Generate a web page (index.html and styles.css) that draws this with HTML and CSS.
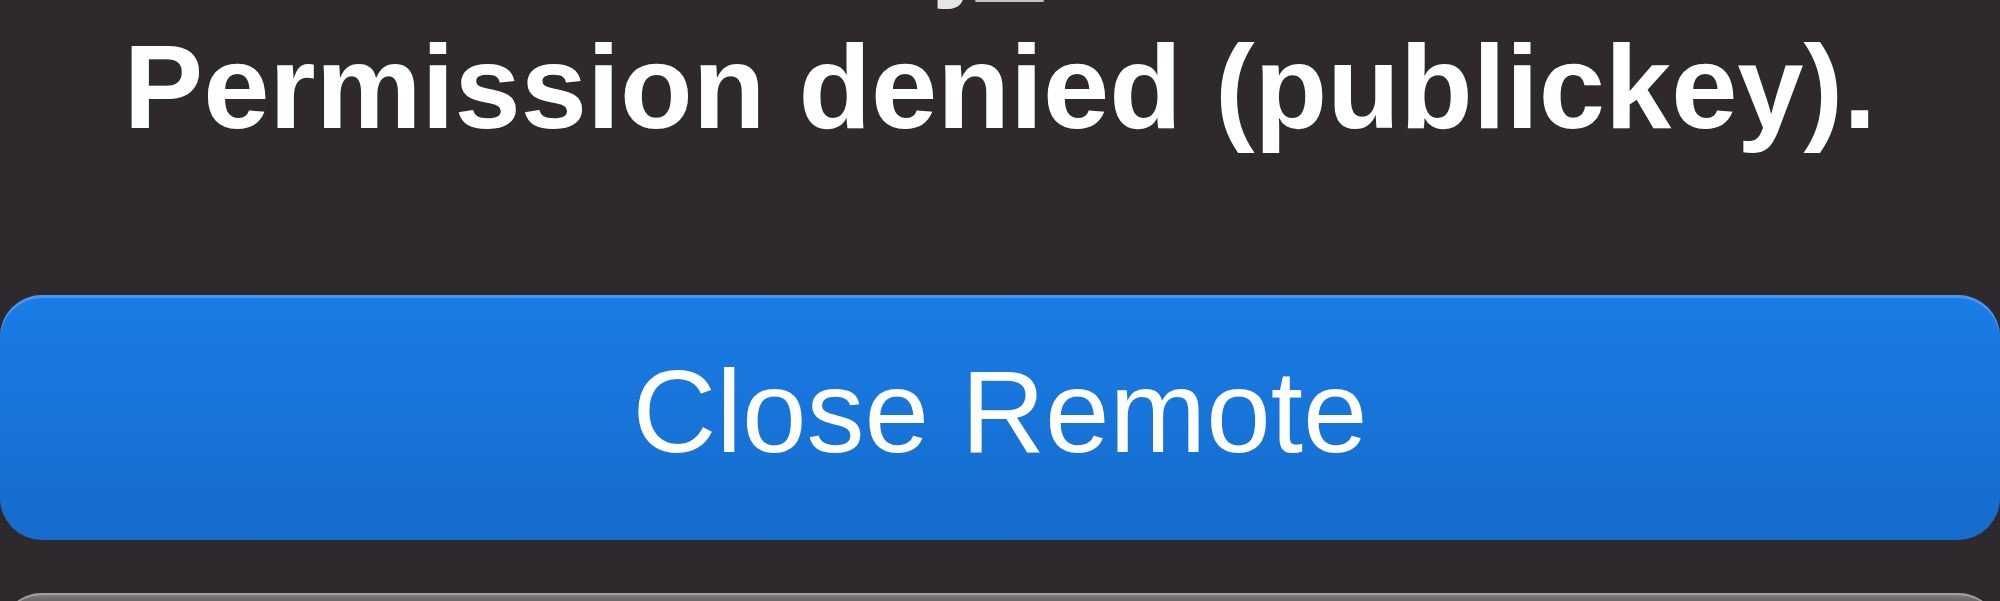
FILE: index.html
```html
<!DOCTYPE html>
<html lang="en">
<head>
<meta charset="utf-8">
<title>Remote error</title>
<link rel="stylesheet" href="styles.css">
</head>
<body>
<main class="dialog">
  <div class="message">
    <p class="line ghost">j<span class="low">_</span></p>
    <p class="line">Permission denied (publickey).</p>
  </div>
  <div class="actions">
    <button class="btn btn-primary" type="button"><span class="btn-label">Close Remote</span></button>
    <button class="btn btn-secondary" type="button"><span class="btn-label">Retry</span></button>
  </div>
</main>
</body>
</html>
```
FILE: styles.css
```css
html, body {
  margin: 0;
  padding: 0;
  background: #2d292d;
  overflow: hidden;
}

.dialog {
  width: 2000px;
  height: 601px;
  display: flex;
  flex-direction: column;
  overflow: hidden;
}

.message {
  margin-top: -129px;
  font-family: "Liberation Sans", Arial, sans-serif;
  font-weight: 700;
  font-size: 119px;
  line-height: 144px;
  color: #ffffff;
  text-align: center;
}

.line {
  margin: 0;
  white-space: nowrap;
}

.ghost {
  color: #e6e4e6;
  letter-spacing: 4px;
  padding-right: 14px;
}

.low {
  line-height: 0;
  vertical-align: -3px;
  color: #c4c0c3;
}

.actions {
  margin-top: 136px;
  display: flex;
  flex-direction: column;
  gap: 53px;
}

.btn {
  box-sizing: border-box;
  width: 2000px;
  height: 245px;
  border: none;
  border-radius: 42px;
  padding: 0 0 12px 0;
  margin: 0;
  display: flex;
  align-items: center;
  justify-content: center;
  font-family: "Liberation Sans", Arial, sans-serif;
  font-weight: 400;
  font-size: 116px;
  color: #ffffff;
  flex: none;
}

.btn-label {
  line-height: normal;
}

.btn-primary {
  background: linear-gradient(#1a7ce6, #156ccb);
  box-shadow: inset 0 3px 0 #4a95ee;
}

.btn-secondary {
  background: linear-gradient(#8d898c 0, #6d696c 6px, #5c585b);
  box-shadow: inset 0 2px 0 #a29ea1;
}
```
